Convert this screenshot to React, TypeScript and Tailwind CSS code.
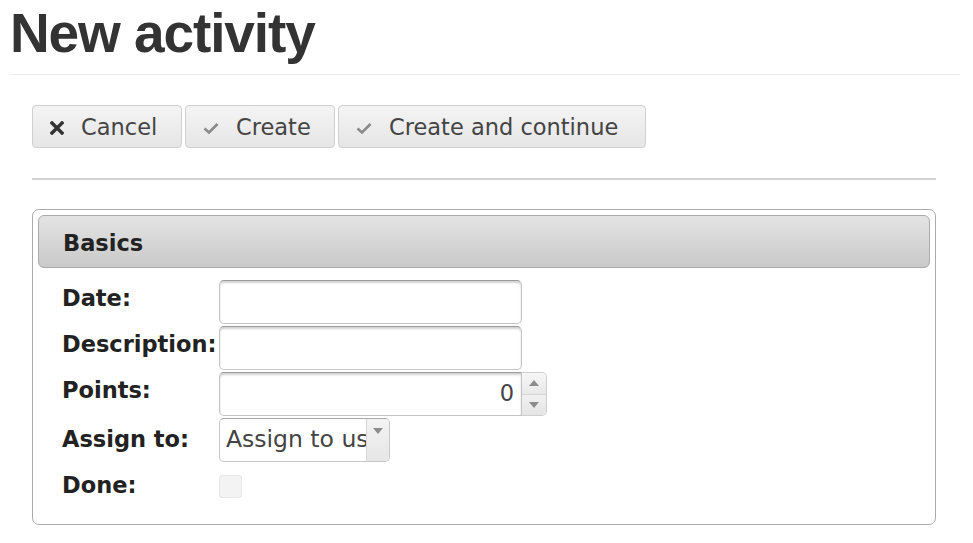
import React from 'react';

const body = { fontFamily: '"DejaVu Sans", Verdana, sans-serif' };

const CrossIcon = () => (
  <svg width="14" height="14" viewBox="0 0 14 14" className="shrink-0">
    <path d="M2 2 L12 12 M12 2 L2 12" stroke="#333" strokeWidth="3.4" strokeLinecap="square" />
  </svg>
);

const CheckIcon = () => (
  <svg width="16" height="14" viewBox="0 0 16 14" className="shrink-0">
    <path d="M1.5 7.5 L6 11.5 L14.5 3" stroke="#8a8a8a" strokeWidth="2.6" fill="none" />
  </svg>
);

type ToolbarButtonProps = {
  icon: React.ReactNode;
  label: string;
  width: string;
};

const ToolbarButton = ({ icon, label, width }: ToolbarButtonProps) => (
  <button
    className={`flex h-[43px] ${width} items-center gap-[17px] rounded-[4px] border border-[#d0d0d0] bg-gradient-to-b from-[#f4f4f4] to-[#e6e6e6] pt-[3px] pl-[17px] text-[22.5px] text-[#444]`}
    style={body}
  >
    {icon}
    <span>{label}</span>
  </button>
);

const TextInput = ({ className = '' }: { className?: string }) => (
  <div
    className={`h-[44px] rounded-[5px] border border-[#c4c4c4] border-t-[#9a9a9a] bg-white shadow-[inset_0_2px_2px_rgba(0,0,0,0.18)] ${className}`}
  />
);

type FormRowProps = {
  label: string;
  raised?: boolean;
  children: React.ReactNode;
};

const FormRow = ({ label, raised = true, children }: FormRowProps) => (
  <div className="flex items-center">
    <div
      className={`w-[157px] shrink-0 text-[22.5px] font-bold whitespace-nowrap text-[#222] ${raised ? 'pb-[7px]' : ''}`}
    >
      {label}
    </div>
    {children}
  </div>
);

export default function App() {
  return (
    <div className="h-[543px] w-[973px] overflow-hidden bg-white" style={body}>
      <div className="mr-[13px] ml-[10px] border-b border-[#ececec] pt-[1px] pb-[9px]">
        <h1
          className="text-[55px] leading-[64px] font-bold tracking-[-1.1px] text-[#333]"
          style={{ fontFamily: '"Liberation Sans", Arial, sans-serif' }}
        >
          New activity
        </h1>
      </div>

      <div className="mt-[30px] mr-[37px] ml-[32px]">
        <div className="flex gap-[3px]">
          <ToolbarButton icon={<CrossIcon />} label="Cancel" width="w-[150px]" />
          <ToolbarButton icon={<CheckIcon />} label="Create" width="w-[150px]" />
          <ToolbarButton icon={<CheckIcon />} label="Create and continue" width="w-[308px]" />
        </div>

        <div className="mt-[30px] h-[2px] bg-[#d2d2d2]" />

        <div className="mt-[29px] h-[316px] rounded-[7px] border border-[#ababab] p-[5px]">
          <div className="flex h-[53px] items-center rounded-[6px] border border-[#aaa] bg-gradient-to-b from-[#e4e4e4] to-[#c9c9c9] pt-[5px] pl-[24px] text-[22.5px] font-bold text-[#222]">
            Basics
          </div>

          <div className="mt-[12px] flex flex-col gap-[2px] pl-[24px]">
            <FormRow label="Date:">
              <TextInput className="w-[303px]" />
            </FormRow>
            <FormRow label="Description:">
              <TextInput className="w-[303px]" />
            </FormRow>
            <FormRow label="Points:">
              <div className="flex">
                <div className="flex h-[44px] w-[303px] items-center justify-end rounded-l-[5px] border border-[#c4c4c4] border-t-[#9a9a9a] bg-white pr-[7px] text-[22.5px] text-[#444] shadow-[inset_0_2px_2px_rgba(0,0,0,0.18)]">
                  0
                </div>
                <div className="flex h-[44px] w-[25px] flex-col overflow-hidden rounded-r-[5px] border border-l-0 border-[#cfcfcf]">
                  <div className="flex flex-1 items-center justify-center border-b border-[#d5d5d5] bg-gradient-to-b from-[#f6f6f6] to-[#e9e9e9]">
                    <svg width="10" height="6" viewBox="0 0 10 6">
                      <path d="M0 6 L5 0 L10 6 Z" fill="#8c8c8c" />
                    </svg>
                  </div>
                  <div className="flex flex-1 items-center justify-center bg-gradient-to-b from-[#f1f1f1] to-[#e4e4e4]">
                    <svg width="10" height="6" viewBox="0 0 10 6">
                      <path d="M0 0 L10 0 L5 6 Z" fill="#8c8c8c" />
                    </svg>
                  </div>
                </div>
              </div>
            </FormRow>
            <FormRow label="Assign to:" raised={false}>
              <div className="flex h-[44px] w-[171px] overflow-hidden rounded-[5px] border border-[#c8c8c8] border-t-[#a8a8a8] bg-white">
                <div className="flex flex-1 items-center overflow-hidden pl-[6px] text-[23.5px] whitespace-nowrap text-[#444]">
                  Assign to us
                </div>
                <div className="flex w-[23px] shrink-0 justify-center border-l border-[#d6d6d6] bg-gradient-to-b from-[#f3f3f3] to-[#e6e6e6] pt-[9px]">
                  <svg width="10" height="6" viewBox="0 0 10 6">
                    <path d="M0 0 L10 0 L5 6 Z" fill="#8c8c8c" />
                  </svg>
                </div>
              </div>
            </FormRow>
            <div className="flex h-[44px] items-center">
              <div className="w-[157px] shrink-0 text-[22.5px] font-bold text-[#222]">Done:</div>
              <div className="h-[23px] w-[23px] rounded-[3px] border border-[#e6e6e6] bg-[#f3f3f3]" />
            </div>
          </div>
        </div>
      </div>
    </div>
  );
}
